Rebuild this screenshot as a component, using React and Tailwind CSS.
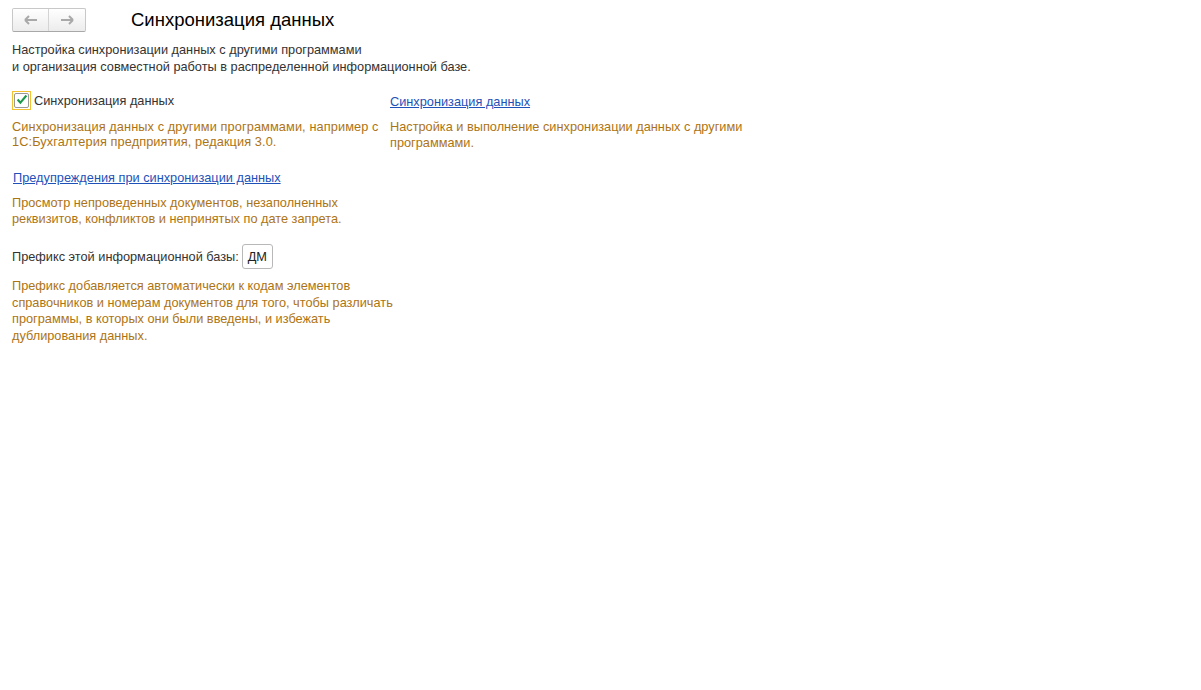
import React, { useState } from "react";

const note = "text-[#ad7414]";

export default function App() {
  const [sync, setSync] = useState(true);

  return (
    <div className="min-h-screen bg-white text-[12.75px] leading-[16px] text-[#333] whitespace-nowrap font-['Arial','Liberation_Sans',sans-serif]">
      {/* Header */}
      <div className="flex items-center pl-[12px] pt-[8px]">
        <div className="flex h-[24px] w-[74px] rounded-[2px] border border-[#c8c8c8] border-b-[#a8a8a8] bg-gradient-to-b from-white to-[#ececec]">
          <button className="flex w-1/2 items-center justify-center border-r border-[#d4d4d4]">
            <svg width="14" height="10" viewBox="0 0 14 10">
              <path d="M1 5h12M1 5l4-4M1 5l4 4" stroke="#a9a9a9" strokeWidth="2" fill="none" />
            </svg>
          </button>
          <button className="flex w-1/2 items-center justify-center">
            <svg width="14" height="10" viewBox="0 0 14 10">
              <path d="M13 5H1M13 5l-4-4M13 5l-4 4" stroke="#a9a9a9" strokeWidth="2" fill="none" />
            </svg>
          </button>
        </div>
        <h1 className="ml-[45px] text-[18.5px] leading-[24px] text-black">Синхронизация данных</h1>
      </div>

      <p className="ml-[12px] mt-[9px] leading-[17px]">
        Настройка синхронизации данных с другими программами
        <br />и организация совместной работы в распределенной информационной базе.
      </p>

      <div className="mt-[16px] flex">
        {/* Left column */}
        <div className="w-[378px] pl-[12px]">
          <label className="flex items-center gap-[3px]">
            <span
              onClick={() => setSync((v) => !v)}
              className="flex h-[19px] w-[19px] items-center justify-center border border-[#f2c230]"
            >
              <span className="flex h-[15px] w-[15px] items-center justify-center rounded-[2px] border border-[#9a9a9a] bg-white">
                {sync && (
                  <svg width="15" height="13" viewBox="0 0 15 13" className="-mt-[2px] ml-[1px]">
                    <path d="M2 6.5l3.5 4L13 1.5" stroke="#1a9a4a" strokeWidth="2.6" fill="none" />
                  </svg>
                )}
              </span>
            </span>
            <span>Синхронизация данных</span>
          </label>
          <p className={`${note} mt-[9px] leading-[15px] tracking-[0.1px]`}>
            Синхронизация данных с другими программами, например с
            <br />
            1С:Бухгалтерия предприятия, редакция 3.0.
          </p>

          <a href="#" className="mt-[21px] ml-[1px] inline-block text-[#1e52b8] underline">
            Предупреждения при синхронизации данных
          </a>
          <p className={`${note} mt-[9px]`}>
            Просмотр непроведенных документов, незаполненных
            <br />
            реквизитов, конфликтов и непринятых по дате запрета.
          </p>

          <div className="mt-[17px] flex items-center gap-[3px]">
            <span>Префикс этой информационной базы:</span>
            <span className="flex h-[25px] w-[31px] items-center justify-center rounded-[3px] border border-[#b8b8b8] text-[#222]">
              ДМ
            </span>
          </div>
          <p className={`${note} mt-[9px] leading-[16.5px]`}>
            Префикс добавляется автоматически к кодам элементов
            <br />
            справочников и номерам документов для того, чтобы различать
            <br />
            программы, в которых они были введены, и избежать
            <br />
            дублирования данных.
          </p>
        </div>

        {/* Right column */}
        <div className="pl-[12px] pt-[3px]">
          <a href="#" className="inline-block text-[#1e52b8] underline">
            Синхронизация данных
          </a>
          <p className={`${note} mt-[9px]`}>
            Настройка и выполнение синхронизации данных с другими
            <br />
            программами.
          </p>
        </div>
      </div>
    </div>
  );
}
